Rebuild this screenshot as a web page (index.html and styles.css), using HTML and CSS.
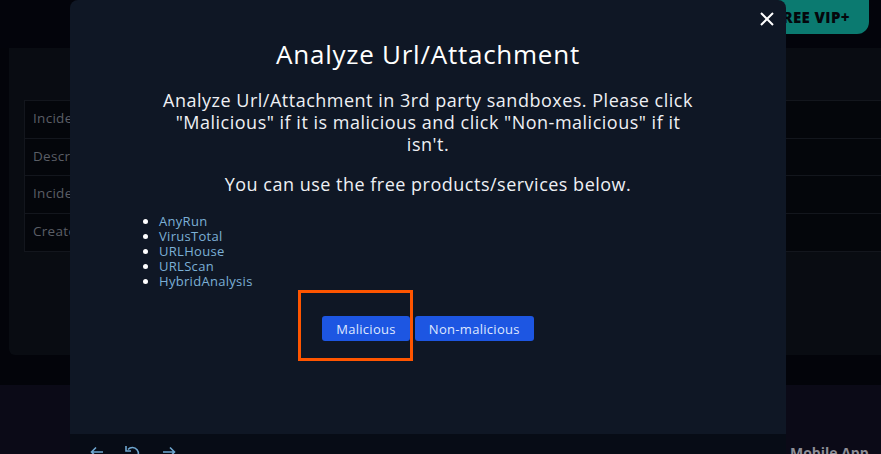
FILE: index.html
```html
<!DOCTYPE html>
<html lang="en">
<head>
<meta charset="utf-8">
<title>Analyze Url/Attachment</title>
<link rel="stylesheet" href="styles.css">
</head>
<body>
<div class="page">
  <header class="topbar">
    <button class="vip">FREE VIP+</button>
  </header>
  <section class="panel">
    <div class="table">
      <div class="row">Incident</div>
      <div class="row">Description</div>
      <div class="row">Incident</div>
      <div class="row">Created</div>
    </div>
  </section>
  <div class="spacer"></div>
  <footer class="footer">
    <span class="mobile">Mobile App</span>
  </footer>
</div>

<div class="modal">
  <button class="close" aria-label="Close">
    <svg width="14" height="14" viewBox="0 0 14 14"><path d="M1 1L13 13M13 1L1 13" stroke="#fff" stroke-width="2" fill="none"/></svg>
  </button>
  <div class="modal-body">
    <h2 class="title">Analyze Url/Attachment</h2>
    <p class="desc">Analyze Url/Attachment in 3rd party sandboxes. Please click<br>"Malicious" if it is malicious and click "Non-malicious" if it<br>isn't.</p>
    <p class="desc">You can use the free products/services below.</p>
    <ul class="links">
      <li>AnyRun</li>
      <li>VirusTotal</li>
      <li>URLHouse</li>
      <li>URLScan</li>
      <li>HybridAnalysis</li>
    </ul>
    <div class="actions">
      <button class="btn">Malicious</button>
      <button class="btn">Non-malicious</button>
    </div>
  </div>
  <div class="modal-foot">
    <svg width="14" height="14" viewBox="0 0 14 14"><path d="M13 7H2M6 2.5L1.5 7L6 11.5" stroke="#6fa6cf" stroke-width="1.6" fill="none"/></svg>
    <svg width="18" height="16" viewBox="0 0 18 16"><path d="M4 4.5A6 6 0 1 1 3 11" stroke="#6fa6cf" stroke-width="1.6" fill="none"/><path d="M2 1V6H7" stroke="#6fa6cf" stroke-width="1.6" fill="none"/></svg>
    <svg width="14" height="14" viewBox="0 0 14 14"><path d="M1 7H12M8 2.5L12.5 7L8 11.5" stroke="#6fa6cf" stroke-width="1.6" fill="none"/></svg>
  </div>
  <div class="highlight"></div>
</div>
</body>
</html>
```

FILE: styles.css
```css
* { box-sizing: border-box; }
html, body {
  margin: 0;
  width: 881px;
  height: 454px;
  overflow: hidden;
  background: #03040a;
  font-family: "Open Sans", "DejaVu Sans", sans-serif;
}
.page {
  display: flex;
  flex-direction: column;
  height: 454px;
}
.topbar {
  height: 48px;
  background: #03040b;
  display: flex;
  justify-content: flex-end;
  align-items: flex-start;
  padding-right: 12px;
}
.vip {
  margin-top: -12px;
  height: 46px;
  padding: 12px 19px 0 70px;
  border: 0;
  border-radius: 12px;
  background: #0b7a70;
  color: #05070c;
  font-family: "Open Sans", sans-serif;
  font-weight: 800;
  font-size: 15px;
  letter-spacing: 0.4px;
}
.panel {
  margin-left: 9px;
  height: 307px;
  background: #090c12;
  border-radius: 0 0 0 6px;
  padding: 52px 0 0 15px;
}
.table {
  border: 1px solid #13161d;
  border-right: 0;
}
.row {
  height: 37.5px;
  background: #04060b;
  border-bottom: 1px solid #13161d;
  color: #5b5e66;
  font-size: 13.5px;
  line-height: 34px;
  padding-left: 8px;
  letter-spacing: 0.3px;
}
.row:last-child { border-bottom: 0; }
.spacer { height: 30px; }
.footer {
  flex: 1;
  background: #0b0a17;
  position: relative;
}
.mobile {
  position: absolute;
  left: 790px;
  top: 58px;
  color: #8e8e96;
  font-weight: 700;
  font-size: 14px;
}

.modal {
  position: absolute;
  left: 70px;
  top: 0;
  width: 716px;
  height: 470px;
  background: #0f1725;
  border-radius: 8px 8px 0 0;
  display: flex;
  flex-direction: column;
}
.close {
  position: absolute;
  right: 12px;
  top: 12px;
  width: 14px;
  height: 14px;
  padding: 0;
  border: 0;
  background: none;
  display: flex;
}
.modal-body {
  height: 434px;
  padding-top: 38px;
  display: flex;
  flex-direction: column;
  align-items: center;
}
.title {
  margin: 0;
  font-size: 26px;
  line-height: 33px;
  font-weight: 400;
  letter-spacing: 0.75px;
  color: #ffffff;
}
.desc {
  margin: 18px 0 0;
  font-size: 18px;
  line-height: 22px;
  letter-spacing: 0.5px;
  color: #eef0f4;
  text-align: center;
}
.desc + .desc { margin-top: 18px; }
.links {
  align-self: flex-start;
  margin: 19px 0 0 80px;
  padding-left: 9px;
  font-size: 13px;
  line-height: 15px;
  letter-spacing: 0.3px;
  color: #7cb0d6;
}
.links li::marker { color: #ffffff; }
.actions {
  margin-top: 27px;
  display: flex;
  gap: 5px;
}
.btn {
  height: 25px;
  padding: 0 14px;
  border: 0;
  border-radius: 3px;
  background: #1d56e2;
  color: #dfe7ff;
  font-family: "Open Sans", sans-serif;
  font-size: 13px;
  letter-spacing: 0.3px;
}
.modal-foot {
  flex: 1;
  background: #070c16;
  display: flex;
  gap: 20px;
  padding: 11px 0 0 20px;
}
.highlight {
  position: absolute;
  left: 228px;
  top: 290px;
  width: 115px;
  height: 71px;
  border: 3px solid #ff5500;
}
```
